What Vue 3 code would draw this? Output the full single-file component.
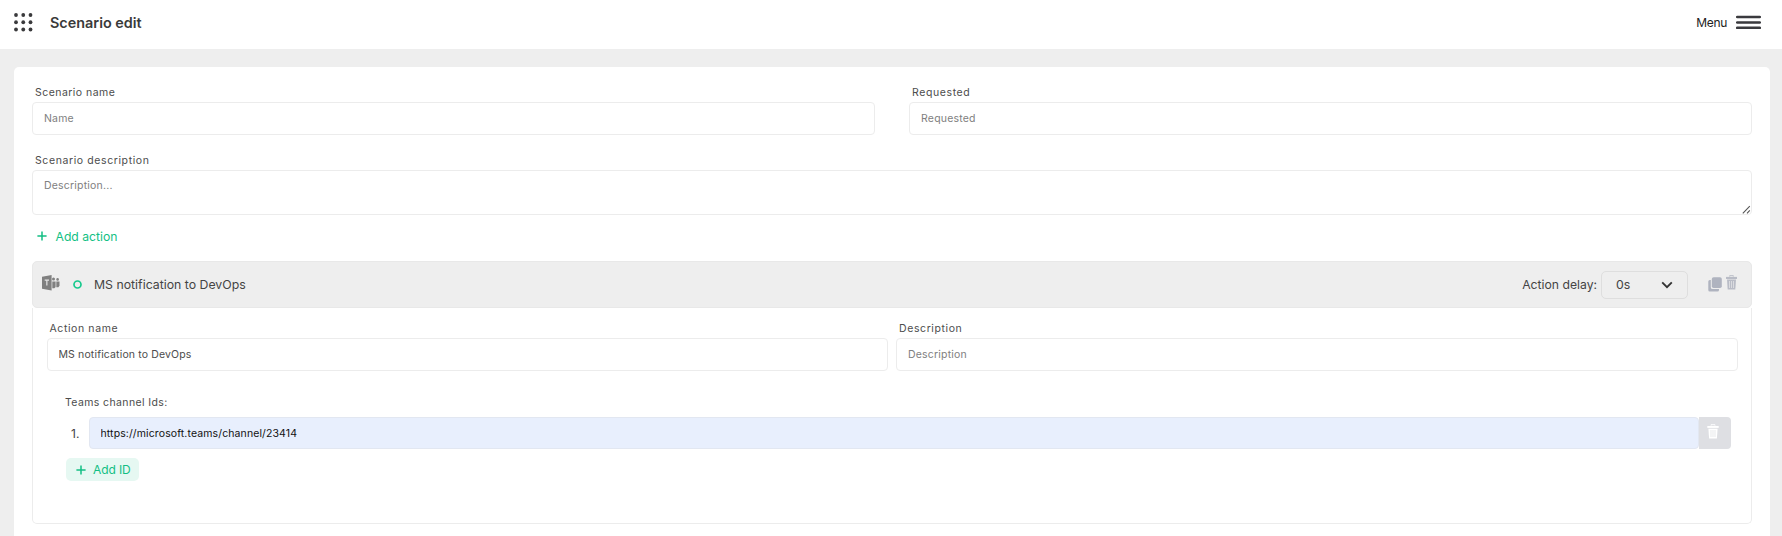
<script setup>
import { ref } from 'vue'

const name = ref('')
const requested = ref('')
const description = ref('')
const actionName = ref('MS notification to DevOps')
const actionDescription = ref('')
const channel = ref('https://microsoft.teams/channel/23414')
const dots = [0, 1, 2].flatMap((r) => [0, 1, 2].map((c) => ({ x: 2 + c * 7.25, y: 2 + r * 7.25 })))
</script>

<template>
  <div class="page">
    <header class="topbar">
      <svg class="grid-icon" width="19" height="19" viewBox="0 0 19 19">
        <circle v-for="(d, i) in dots" :key="i" :cx="d.x" :cy="d.y" r="1.9" fill="#3a3a3c" />
      </svg>
      <h1 class="title">Scenario edit</h1>
      <span class="menu">Menu</span>
      <svg class="burger" width="25" height="15" viewBox="0 0 25 15">
        <path d="M1.2 2H23.8M1.2 7.5H23.8M1.2 12.8H23.8" stroke="#3a3a3e" stroke-width="2.6" stroke-linecap="round" />
      </svg>
    </header>

    <main class="card">
      <div class="row">
        <div class="field">
          <label class="label tight">Scenario name</label>
          <input v-model="name" class="input" placeholder="Name" />
        </div>
        <div class="field">
          <label class="label">Requested</label>
          <input v-model="requested" class="input" placeholder="Requested" />
        </div>
      </div>

      <div class="field desc">
        <label class="label">Scenario description</label>
        <textarea v-model="description" class="input area" placeholder="Description..."></textarea>
        <svg class="grip" width="9" height="9" viewBox="0 0 9 9">
          <path d="M0.8 8.4L7.8 1.2M5 8.4L7.8 5.4" stroke="#555" stroke-width="1.1" />
        </svg>
      </div>

      <button class="add-action">
        <svg width="10" height="10" viewBox="0 0 10 10"><path d="M5 .4V9.6M.4 5H9.6" stroke="#13bf84" stroke-width="1.5" /></svg>
        <span>Add action</span>
      </button>

      <section class="action">
        <div class="action-head">
          <svg class="teams" width="18" height="16" viewBox="0 0 18 16">
            <path d="M0 1.8L9.6 0V15.6L0 13.8Z" fill="#808080" />
            <path d="M2.7 5.2H7M4.85 5.2V10.6" stroke="#e4e4e4" stroke-width="1.2" />
            <circle cx="11.5" cy="4.1" r="1.5" fill="#808080" />
            <circle cx="15.6" cy="4.4" r="1.3" fill="#808080" />
            <path d="M10.3 6.5H13.6V12L12.4 13.2H10.3Z" fill="#808080" />
            <path d="M14.3 6.5H17.5V10.8L16.4 12.2H14.3Z" fill="#808080" />
          </svg>
          <svg class="ring" width="9" height="9" viewBox="0 0 9 9"><circle cx="4.5" cy="4.5" r="3.5" fill="none" stroke="#17c98d" stroke-width="1.7" /></svg>
          <span class="action-title">MS notification to DevOps</span>
          <span class="delay-label">Action delay:</span>
          <div class="select">
            <span>0s</span>
            <svg width="12" height="8" viewBox="0 0 12 8"><path d="M1.2 1.4L6 6.1L10.8 1.4" fill="none" stroke="#333" stroke-width="1.9" /></svg>
          </div>
          <svg class="copy" width="14" height="15" viewBox="0 0 14 15">
            <rect x="3.8" y="0.2" width="10" height="10.8" rx="1.8" fill="#afb3bf" />
            <path d="M2.8 3H1.8A1.5 1.5 0 0 0 .3 4.5V13A1.5 1.5 0 0 0 1.8 14.5H9.5A1.5 1.5 0 0 0 11 13V12.1H4.7A1.9 1.9 0 0 1 2.8 10.2Z" fill="#afb3bf" />
          </svg>
          <svg class="trash" width="11" height="15" viewBox="0 0 11 15">
            <path d="M3.7 1.6V.6H7.3V1.6" fill="none" stroke="#b9bcc6" stroke-width=".9" />
            <path d="M0 1.9H11V4H0Z" fill="#b9bcc6" />
            <path d="M1 4.6H10L9.3 14.5H1.7Z" fill="#b9bcc6" />
            <path d="M3.5 6V13M5.5 6V13M7.5 6V13" stroke="#e8e8ea" stroke-width=".7" />
          </svg>
        </div>

        <div class="action-body">
          <div class="row inner">
            <div class="field">
              <label class="label">Action name</label>
              <input v-model="actionName" class="input filled" />
            </div>
            <div class="field">
              <label class="label">Description</label>
              <input v-model="actionDescription" class="input" placeholder="Description" />
            </div>
          </div>

          <div class="channels">
            <div class="label channels-label">Teams channel Ids:</div>
            <div class="channel">
              <span class="number">1.</span>
              <input v-model="channel" class="input url" />
              <button class="remove">
                <svg width="12" height="15" viewBox="0 0 12 15">
                  <path d="M4 1.6V.7H8V1.6" fill="none" stroke="#fff" stroke-width=".9" />
                  <path d="M.3 2H11.7V3.9H.3Z" fill="#fff" />
                  <path d="M1.4 4.8H10.6L9.9 14.5H2.1Z" fill="#fff" />
                  <path d="M4 6V13M6 6V13M8 6V13" stroke="#dedfe3" stroke-width=".7" />
                </svg>
              </button>
            </div>
            <button class="add-id">
              <svg width="10" height="10" viewBox="0 0 10 10"><path d="M5 .4V9.6M.4 5H9.6" stroke="#13bf84" stroke-width="1.5" /></svg>
              <span>Add ID</span>
            </button>
          </div>
        </div>
      </section>
    </main>
  </div>
</template>

<style>
body {
  margin: 0;
  overflow: hidden;
}
</style>

<style scoped>
* {
  box-sizing: border-box;
}
.page {
  height: 536px;
  overflow: hidden;
  background: #eee;
  color: #444;
  font-family: Inter, sans-serif;
}
.topbar {
  display: flex;
  align-items: center;
  height: 49px;
  padding: 0 21px 4px 14px;
  background: #fff;
}
.title {
  margin: 0 auto 0 17px;
  font-size: 14.4px;
  line-height: 20px;
  font-weight: 600;
  color: #3a3a3a;
}
.menu {
  margin-right: 9px;
  font-size: 12px;
  letter-spacing: -0.3px;
  color: #222;
}
.card {
  height: 500px;
  margin: 18px 12px 0 14px;
  padding: 16px 18px 0;
  border-radius: 5px;
  background: #fff;
}
.row {
  display: grid;
  grid-template-columns: 1fr 1fr;
  column-gap: 34px;
}
.label {
  display: block;
  height: 19px;
  padding-left: 3px;
  font-size: 10.5px;
  line-height: 19.5px;
  letter-spacing: 0.6px;
  color: #4c4c4c;
}
.label.tight {
  letter-spacing: 0.46px;
}
.input {
  display: block;
  width: 100%;
  height: 33px;
  padding: 0 11px;
  border: 1px solid #ececec;
  border-radius: 4px;
  outline: none;
  background: #fff;
  font: 10.5px/16px Inter, sans-serif;
  letter-spacing: 0.2px;
  color: #4c4c4c;
}
.input::placeholder {
  color: #808080;
  opacity: 1;
}
.input.filled {
  letter-spacing: 0.14px;
}
.desc {
  position: relative;
  margin-top: 16px;
}
.area {
  height: 45px;
  padding-top: 7px;
  resize: none;
}
.grip {
  position: absolute;
  right: 1px;
  bottom: 1px;
}
button {
  padding: 0;
  border: 0;
  background: none;
  font-family: inherit;
}
.add-action {
  display: flex;
  align-items: center;
  gap: 8.5px;
  height: 20px;
  margin: 11px 0 15px 5px;
  font-size: 12.2px;
  color: #13bf84;
}
.action-head {
  display: flex;
  align-items: center;
  height: 47px;
  padding: 0 14px 0 10px;
  border: 1px solid #e8e8e8;
  border-radius: 5px;
  background: #eee;
  font-size: 12.3px;
  color: #444;
}
.teams {
  margin: -4px 13px 0 -1px;
}
.action-title {
  margin: 0 auto 0 12px;
}
.delay-label {
  font-size: 12.2px;
}
.select {
  display: flex;
  align-items: center;
  justify-content: space-between;
  width: 87px;
  height: 28px;
  margin: 0 20px 0 4px;
  padding: 0 14px;
  border: 1px solid #dedede;
  border-radius: 5px;
}
.trash {
  margin: -4px 0 0 4px;
}
.action-body {
  height: 216px;
  padding: 11px 13.5px 0;
  border: 1px solid #ececec;
  border-top: 0;
  border-radius: 0 0 5px 5px;
}
.inner {
  column-gap: 8px;
}
.channels {
  padding: 22px 6.5px 0 18.5px;
}
.channels-label {
  height: 24px;
  padding: 0;
  letter-spacing: 0.38px;
}
.channel {
  display: flex;
  height: 32px;
}
.number {
  width: 23.5px;
  padding-left: 6px;
  font-size: 12px;
  line-height: 34px;
}
.url {
  flex: 1;
  height: 32px;
  border-color: #e2e7f1;
  background: #e8effd;
  letter-spacing: 0.11px;
  color: #111;
}
.remove {
  display: flex;
  align-items: flex-start;
  width: 32px;
  height: 32px;
  padding: 7px 0 0 8px;
  border-radius: 0 4px 4px 0;
  background: #dedfe3;
}
.add-id {
  display: flex;
  align-items: center;
  gap: 7.5px;
  width: 73px;
  height: 23px;
  margin: 9px 0 0 1px;
  padding-left: 9.5px;
  border-radius: 5px;
  background: #e6f8f2;
  font-size: 12px;
  letter-spacing: -0.1px;
  color: #13bf84;
}
</style>
